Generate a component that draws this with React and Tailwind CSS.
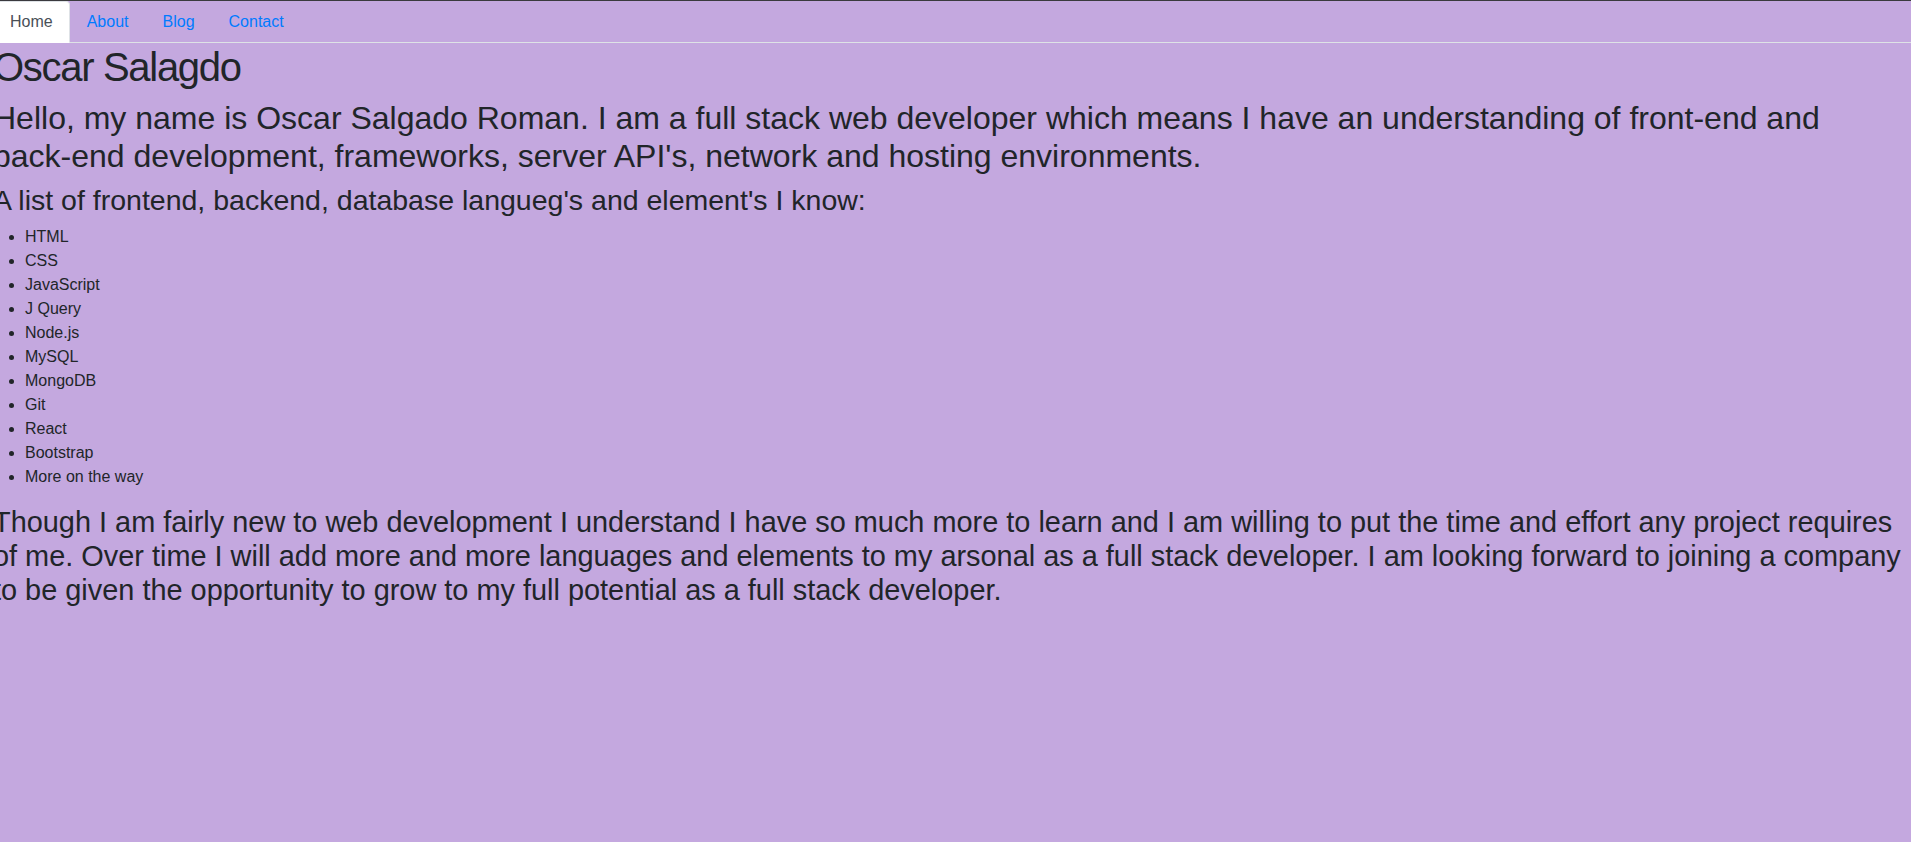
import { useState } from "react";

const skills = [
  "HTML",
  "CSS",
  "JavaScript",
  "J Query",
  "Node.js",
  "MySQL",
  "MongoDB",
  "Git",
  "React",
  "Bootstrap",
  "More on the way",
];

const tabs = ["Home", "About", "Blog", "Contact"];

export default function App() {
  const [active, setActive] = useState("Home");

  return (
    <div className="min-h-screen overflow-hidden bg-[#c4a8df] text-[#212529] font-['Liberation_Sans',sans-serif]">
      <div className="h-px bg-[#3a3a3e]" />

      {/* Nav tabs */}
      <ul className="-ml-[7px] flex border-b border-[#dee2e6]">
        {tabs.map((t) => (
          <li key={t} className="-mb-px">
            <a
              href="#"
              onClick={(e) => { e.preventDefault(); setActive(t); }}
              className={
                t === active
                  ? "block rounded-t border border-[#dee2e6] border-b-white bg-white px-4 py-2 text-base leading-6 text-[#495057]"
                  : "block rounded-t border border-transparent px-4 py-2 text-base leading-6 text-[#007bff]"
              }
            >
              {t}
            </a>
          </li>
        ))}
      </ul>

      <div className="-ml-[7px] -mr-[4px]">
        <h1 className="mb-2 text-[40px] leading-[48px] font-normal tracking-[-1.3px]">Oscar Salagdo</h1>
        <h2 className="mb-2 text-[32px] leading-[1.2] font-normal">
          Hello, my name is Oscar Salgado Roman. I am a full stack web developer which means I have an understanding of front-end and <span className="whitespace-nowrap">back-end</span> development, frameworks, server API's, network and hosting environments.
        </h2>
        <h4 className="mb-2 text-[28.5px] leading-[33.6px] font-normal">
          A list of frontend, backend, database langueg's and element's I know:
        </h4>
        <ul className="mb-4 list-disc pl-8 text-base leading-6">
          {skills.map((s) => (
            <li key={s}>{s}</li>
          ))}
        </ul>
        <h3 className="text-[28.9px] leading-[34px] font-normal">
          Though I am fairly new to web development I understand I have so much more to learn and I am willing to put the time and effort any project requires of me. Over time I will add more and more languages and elements to my arsonal as a full stack developer. I am looking forward to joining a company to be given the opportunity to grow to my full potential as a full stack developer.
        </h3>
      </div>
    </div>
  );
}
